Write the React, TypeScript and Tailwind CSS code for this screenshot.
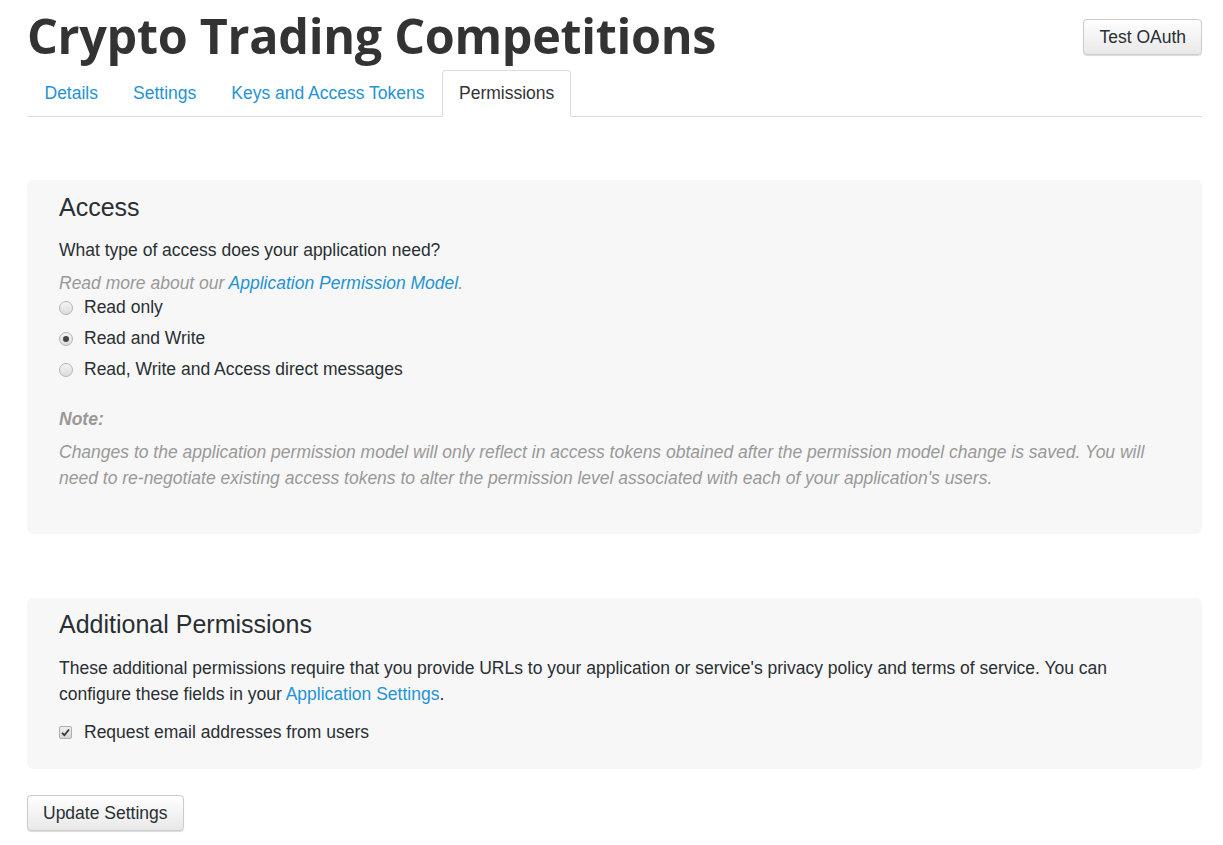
import React from 'react';

const font = { fontFamily: '"Liberation Sans", Arial, sans-serif' };

function Radio({ checked }: { checked?: boolean }) {
  return (
    <span className="w-[14px] h-[14px] rounded-full border border-[#b5b5b5] bg-gradient-to-b from-[#f4f4f4] to-[#dcdcdc] flex items-center justify-center shrink-0">
      {checked && <span className="w-[6px] h-[6px] rounded-full bg-[#444]" />}
    </span>
  );
}

function Checkbox() {
  return (
    <span className="w-[13px] h-[13px] rounded-[2px] border border-[#b0b0b0] bg-gradient-to-b from-[#eee] to-[#d6d6d6] flex items-center justify-center shrink-0">
      <svg width="9" height="9" viewBox="0 0 9 9">
        <path d="M1 4.8 L3.4 7.2 L8 1.5" stroke="#333" strokeWidth="1.8" fill="none" />
      </svg>
    </span>
  );
}

function Button({ children }: { children: React.ReactNode }) {
  return (
    <button className="h-[36px] px-[15px] rounded-[4px] border border-[#ccc] bg-gradient-to-b from-white to-[#e8e8e8] shadow-[0_1px_1px_rgba(0,0,0,0.15)] text-[17.5px] text-[#292f33]">
      {children}
    </button>
  );
}

export default function App() {
  const tabs = ['Details', 'Settings', 'Keys and Access Tokens'];
  return (
    <div className="bg-white min-h-[845px] px-[27px] text-[#292f33]" style={font}>
      <div className="w-[1175px]">
        <div className="flex items-start justify-between">
          <h1
            className="text-[48.5px] font-bold leading-[62px] text-[#333] tracking-[-0.3px] pt-[4px]"
            style={{ fontFamily: '"Open Sans", "Liberation Sans", sans-serif' }}
          >
            Crypto Trading Competitions
          </h1>
          <div className="pt-[19px]">
            <Button>Test OAuth</Button>
          </div>
        </div>

        <div className="flex items-end border-b border-[#ddd] h-[47px] mt-[4px]">
          {tabs.map((t) => (
            <a key={t} className="px-[17.5px] h-[46px] flex items-center text-[17.5px] text-[#2593d3]">
              {t}
            </a>
          ))}
          <span className="px-[16px] h-[47px] -mb-px flex items-center text-[17.5px] text-[#333] border border-[#ddd] border-b-white bg-white rounded-t-[4px]">
            Permissions
          </span>
        </div>

        <div className="mt-[63px] bg-[#f7f7f7] rounded-[6px] pl-[32px] pr-[28px] pt-[12px] pb-[43px]">
          <h2 className="text-[25px] leading-[30px] text-[#292f33]">Access</h2>
          <p className="text-[17.5px] leading-[26px] mt-[15px]">What type of access does your application need?</p>
          <p className="text-[17.5px] leading-[26px] mt-[7px] italic text-[#999]">
            Read more about our <a className="text-[#2593d3]">Application Permission Model</a>.
          </p>
          <div className="flex flex-col -mt-[4px]">
            {[
              ['Read only', false],
              ['Read and Write', true],
              ['Read, Write and Access direct messages', false],
            ].map(([label, checked]) => (
              <label key={label as string} className="flex items-center gap-[11px] h-[31px] text-[17.5px]">
                <Radio checked={checked as boolean} />
                {label as string}
              </label>
            ))}
          </div>
          <p className="text-[17.5px] leading-[26px] mt-[21px] italic font-bold text-[#999]">Note:</p>
          <p className="text-[17.5px] leading-[26px] mt-[7px] italic text-[#999]">
            Changes to the application permission model will only reflect in access tokens obtained after the permission model change is saved. You will need to re-negotiate existing access tokens to alter the permission level associated with each of your application's users.
          </p>
        </div>

        <div className="mt-[64px] bg-[#f7f7f7] rounded-[6px] pl-[32px] pr-[28px] pt-[10px] pb-[24px]">
          <h2 className="text-[25px] leading-[32px] text-[#292f33]">Additional Permissions</h2>
          <p className="text-[17.5px] leading-[26px] mt-[15px]">
            These additional permissions require that you provide URLs to your application or service's privacy policy and terms of service. You can configure these fields in your <a className="text-[#2593d3]">Application Settings</a>.
          </p>
          <label className="flex items-center gap-[12px] h-[26px] mt-[12px] text-[17.5px]">
            <Checkbox />
            Request email addresses from users
          </label>
        </div>

        <div className="mt-[26px]">
          <Button>Update Settings</Button>
        </div>
      </div>
    </div>
  );
}
